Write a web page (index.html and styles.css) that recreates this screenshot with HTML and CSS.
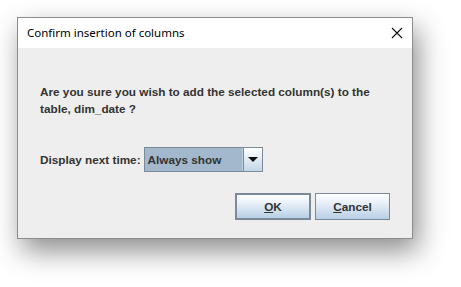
FILE: index.html
```html
<!DOCTYPE html>
<html>
<head>
<meta charset="utf-8">
<link rel="stylesheet" href="styles.css">
</head>
<body>
<div class="window">
  <div class="titlebar">
    <span class="title">Confirm insertion of columns</span>
    <svg class="close" width="12" height="12" viewBox="0 0 12 12"><path d="M1 1 L11 11 M11 1 L1 11" stroke="#111" stroke-width="1.1" fill="none"/></svg>
  </div>
  <div class="content">
    <p class="message">Are you sure you wish to add the selected column(s) to the<br>table, dim_date ?</p>
    <div class="row">
      <span class="label">Display next time:</span>
      <div class="combo">
        <span class="combo-value">Always show</span>
        <span class="combo-btn"><svg width="10" height="6" viewBox="0 0 10 6"><path d="M0 0 H10 L5 5 Z" fill="#111"/></svg></span>
      </div>
    </div>
    <div class="buttons">
      <button class="btn default"><u>O</u>K</button>
      <button class="btn"><u>C</u>ancel</button>
    </div>
  </div>
</div>
</body>
</html>
```
FILE: styles.css
```css
html, body {
  margin: 0;
  padding: 0;
  background: #ffffff;
}
body {
  padding: 17px 0 0 17px;
  height: 287px;
  box-sizing: border-box;
}
.window {
  width: 394px;
  border: 1px solid #8c8c8c;
  background: #eeeeee;
  box-shadow: 5px 12px 26px rgba(0,0,0,0.45);
}
.titlebar {
  height: 30px;
  background: #ffffff;
  display: flex;
  align-items: center;
  justify-content: space-between;
  padding: 0 9px 0 9px;
}
.title {
  font-family: "Noto Sans", "Open Sans", sans-serif;
  font-size: 11.5px;
  color: #000;
  margin-top: -1px;
}
.content {
  padding: 35px 22px 18px 22px;
  font-family: "Liberation Sans", Arial, sans-serif;
  font-weight: bold;
  font-size: 11.75px;
  color: #333333;
}
.message {
  margin: 0;
  line-height: 17px;
}
.row {
  display: flex;
  align-items: center;
  margin-top: 30px;
  gap: 3px;
}
.combo {
  display: flex;
  height: 25px;
  box-sizing: border-box;
  border: 1px solid #7a8a99;
  width: 119px;
}
.combo-value {
  flex: 1;
  background: #a3b8cc;
  border-right: 1px solid #c0cfdd;
  display: flex;
  align-items: center;
  padding-left: 3px;
  color: #333;
}
.combo-btn {
  width: 18px;
  background: linear-gradient(#ffffff, #dce7f2 60%, #c5d6e8);
  display: flex;
  align-items: center;
  justify-content: center;
  border-left: 1px solid #7a8a99;
}
.buttons {
  display: flex;
  justify-content: flex-end;
  gap: 4px;
  margin-top: 21px;
}
.btn {
  width: 75px;
  height: 27px;
  box-sizing: border-box;
  border: 1px solid #7a8a99;
  background: linear-gradient(#ffffff, #e6eef7 40%, #b8cfe5);
  font-family: "Liberation Sans", Arial, sans-serif;
  font-weight: bold;
  font-size: 11.75px;
  color: #333333;
  padding: 0;
}
.btn.default {
  border: 2px solid #7a8a99;
  width: 76px;
}
```
